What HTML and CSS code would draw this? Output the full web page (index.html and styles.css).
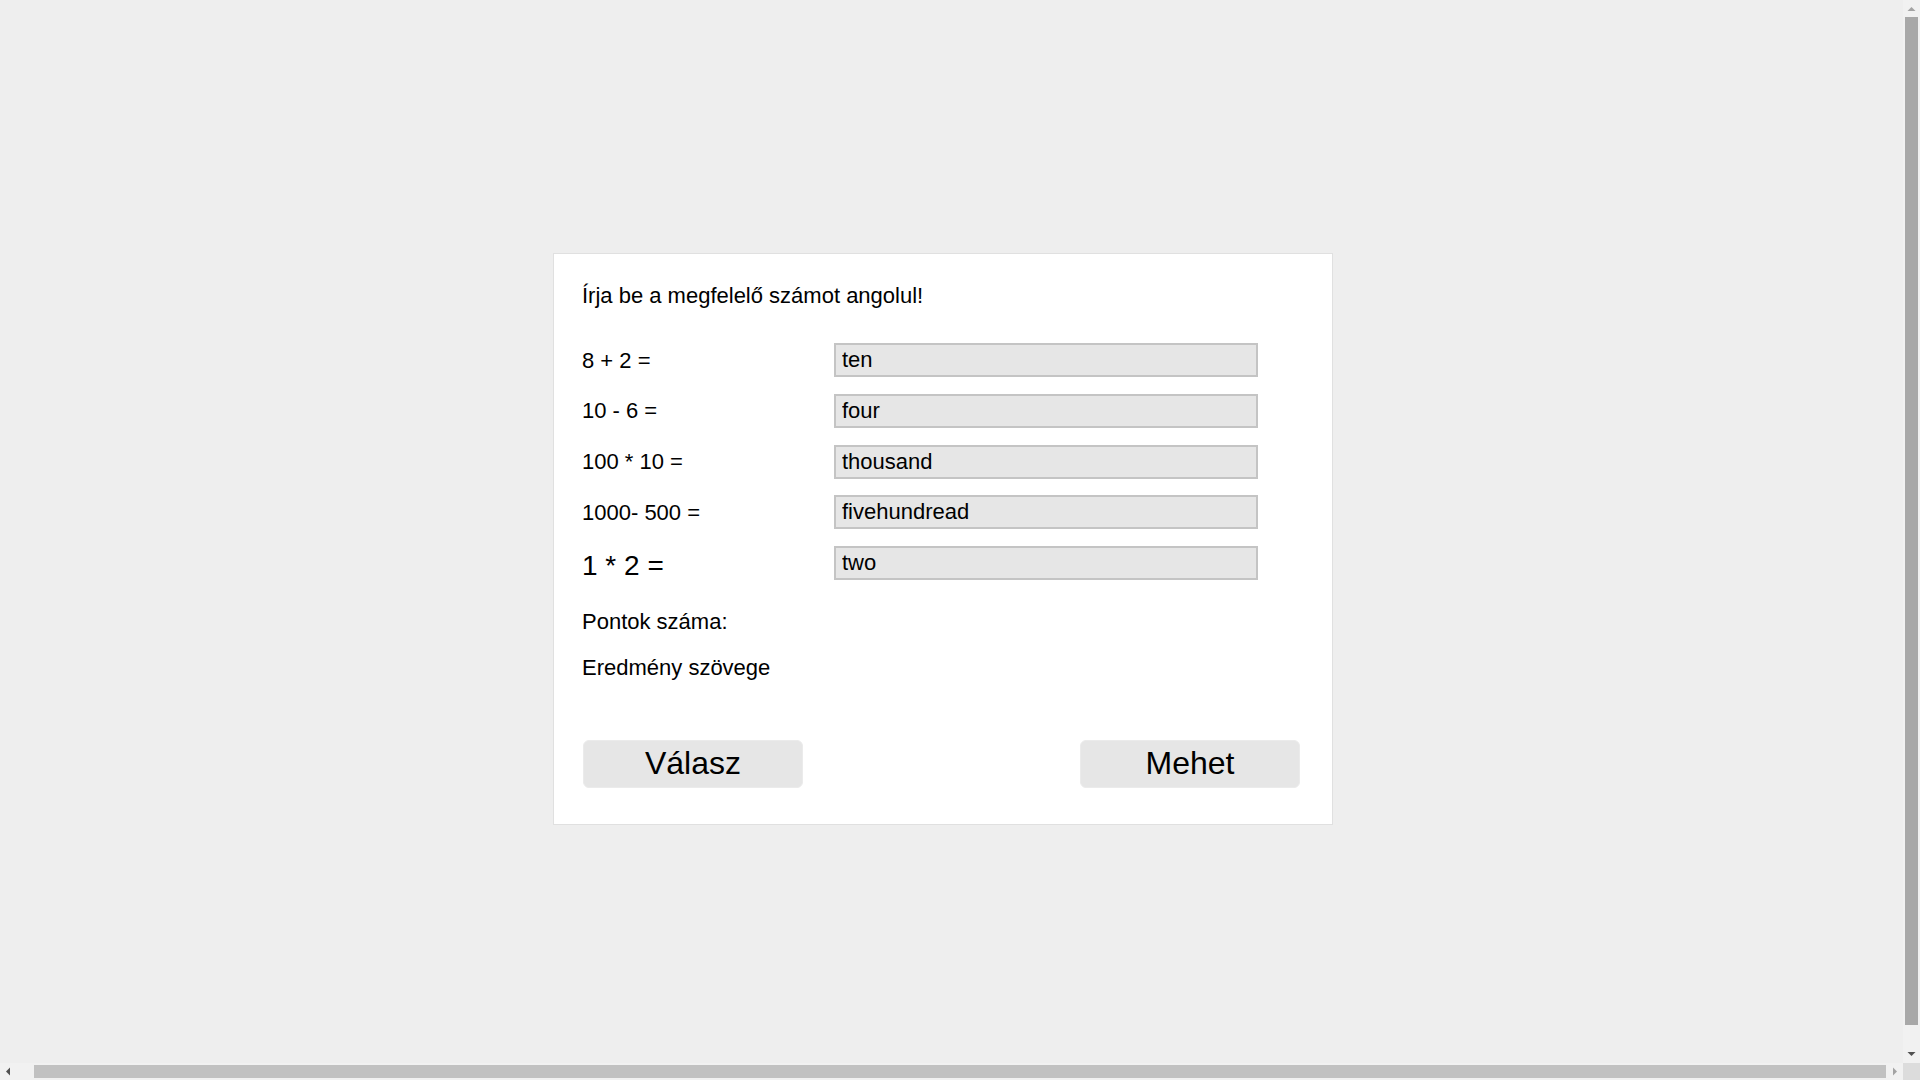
FILE: index.html
```html
<!DOCTYPE html>
<html lang="hu">
<head>
<meta charset="utf-8">
<title>Számok angolul</title>
<link rel="stylesheet" href="styles.css">
</head>
<body>
<div class="page">
  <div class="card">
    <p class="title">Írja be a megfelelő számot angolul!</p>
    <div class="rows">
      <div class="row"><span class="label">8 + 2 =</span><input class="answer" type="text" value="ten"></div>
      <div class="row"><span class="label">10 - 6 =</span><input class="answer" type="text" value="four"></div>
      <div class="row"><span class="label">100 * 10 =</span><input class="answer" type="text" value="thousand"></div>
      <div class="row"><span class="label">1000- 500 =</span><input class="answer" type="text" value="fivehundread"></div>
      <div class="row"><span class="label label-big">1 * 2 =</span><input class="answer" type="text" value="two"></div>
    </div>
    <p class="points">Pontok száma:</p>
    <p class="result">Eredmény szövege</p>
    <div class="buttons">
      <button class="btn" type="button">Válasz</button>
      <button class="btn" type="button">Mehet</button>
    </div>
  </div>
</div>

<div class="vscroll">
  <div class="sb-btn">
    <svg width="17" height="17" viewBox="0 0 17 17"><polygon points="4.5,11 8.5,7 12.5,11" fill="#a3a3a3"/></svg>
  </div>
  <div class="vtrack"><div class="vthumb"></div></div>
  <div class="sb-btn">
    <svg width="17" height="17" viewBox="0 0 17 17"><polygon points="4.5,6 12.5,6 8.5,10" fill="#505050"/></svg>
  </div>
</div>
<div class="hscroll">
  <div class="sb-btn">
    <svg width="17" height="17" viewBox="0 0 17 17"><polygon points="6,8.5 10,4.5 10,12.5" fill="#505050"/></svg>
  </div>
  <div class="htrack"><div class="hthumb"></div></div>
  <div class="sb-btn">
    <svg width="17" height="17" viewBox="0 0 17 17"><polygon points="7,4.5 11,8.5 7,12.5" fill="#a3a3a3"/></svg>
  </div>
</div>
<div class="sb-corner"></div>
</body>
</html>
```

FILE: styles.css
```css
html, body {
  margin: 0;
  padding: 0;
  background: #eeeeee;
  overflow: hidden;
}

body {
  font-family: "Liberation Sans", Arial, sans-serif;
  color: #000;
}

/* page scrolled 17px to the right inside a 1920-wide document */
.page {
  width: calc(100vw - 34px);
  height: calc(100vh - 2px);
  display: flex;
  align-items: center;
  justify-content: center;
}

.card {
  box-sizing: border-box;
  width: 780px;
  background: #ffffff;
  border: 1px solid #e0e0e0;
  padding: 29px 28px 36px 28px;
}

.title {
  margin: 0;
  font-size: 22px;
  line-height: 25px;
}

.rows {
  margin-top: 35px;
  display: flex;
  flex-direction: column;
  gap: 16.67px;
}

.row {
  display: flex;
  align-items: center;
  height: 34px;
}

.label {
  width: 252px;
  flex: none;
  font-size: 22px;
  line-height: 25px;
}

.label-big {
  font-size: 28px;
  line-height: 32px;
  padding-top: 7px;
}

.answer {
  box-sizing: border-box;
  width: 424px;
  height: 34px;
  margin: 0;
  padding: 0 6px;
  border: 2px solid #c4c4c4;
  background: #e6e6e6;
  font-family: "Liberation Sans", Arial, sans-serif;
  font-size: 22px;
  color: #000;
  outline: none;
}

.points {
  margin: 29px 0 0 0;
  font-size: 22px;
  line-height: 25px;
}

.result {
  margin: 21px 0 0 0;
  font-size: 22px;
  line-height: 25px;
}

.buttons {
  margin: 60px 4px 0 1px;
  display: flex;
  justify-content: space-between;
}

.btn {
  box-sizing: border-box;
  width: 220px;
  height: 48px;
  border: 1px solid #ebebeb;
  border-radius: 6px;
  background: #e6e6e6;
  font-family: "Liberation Sans", Arial, sans-serif;
  font-size: 32px;
  color: #000;
  padding: 0;
}

/* browser scrollbars */
.vscroll {
  position: fixed;
  top: 0;
  right: 0;
  width: 17px;
  height: calc(100vh - 17px);
  background: #f1f1f1;
  display: flex;
  flex-direction: column;
}

.hscroll {
  position: fixed;
  left: 0;
  bottom: 0;
  width: calc(100vw - 17px);
  height: 17px;
  background: #f1f1f1;
  display: flex;
}

.sb-corner {
  position: fixed;
  right: 0;
  bottom: 0;
  width: 17px;
  height: 17px;
  background: #dcdcdc;
}

.sb-btn {
  flex: none;
  width: 17px;
  height: 17px;
}

.sb-btn svg {
  display: block;
}

.vtrack {
  flex: 1;
  padding: 0 2px 21px 2px;
  display: flex;
}

.vthumb {
  flex: 1;
  background: #a8a8a8;
}

.htrack {
  flex: 1;
  padding: 2px 0 2px 17px;
  display: flex;
}

.hthumb {
  flex: 1;
  background: #c1c1c1;
}
```
